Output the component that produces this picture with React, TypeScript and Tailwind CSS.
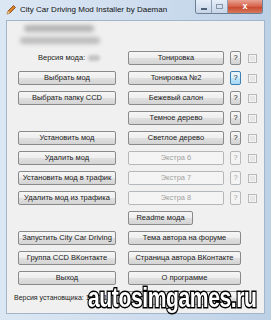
import type { ReactNode } from 'react';

type Kind = 'normal' | 'disabled' | 'focus';

function Btn({ children, width, kind = 'normal' }: { children?: ReactNode; width: string; kind?: Kind }) {
  const look =
    kind === 'disabled'
      ? 'border-[#b5b8bb] bg-[#f4f4f4] text-[#a3a3a3]'
      : kind === 'focus'
        ? 'border-[#3c7fb1] bg-[linear-gradient(#eaf6fd_0%,#d9f0fc_50%,#bee6fd_50%,#a7d9f5_100%)] text-[#1a1a1a]'
        : 'border-[#8a8a8a] bg-[linear-gradient(#f6f6f6_0%,#eeeeee_50%,#e0e0e0_50%,#d4d4d4_100%)] text-[#1a1a1a]';
  return (
    <div
      className={`${width} flex h-[14px] shrink-0 items-center justify-center rounded-[2px] border text-[7.5px] leading-none whitespace-nowrap ${look}`}
    >
      {children}
    </div>
  );
}

function Check() {
  return (
    <div className="ml-[7px] flex h-[9px] w-[9px] shrink-0 items-center justify-center border border-[#b9b9b9] bg-[#f4f4f4]">
      <div className="h-[5px] w-[5px] bg-[#e6e6e6]" />
    </div>
  );
}

function Extra({ label, kind = 'normal', q = 'normal' }: { label: string; kind?: Kind; q?: Kind }) {
  return (
    <div className="flex items-center">
      <Btn width="w-[96px]" kind={kind}>
        {label}
      </Btn>
      <div className="ml-[6px]">
        <Btn width="w-[11px]" kind={q}>
          ?
        </Btn>
      </div>
      <Check />
    </div>
  );
}

function Row({ left, right, indent = 'pl-[11px]' }: { left?: ReactNode; right?: ReactNode; indent?: string }) {
  return (
    <div className={`flex h-[14px] items-center ${indent}`}>
      <div className="flex w-[110px] shrink-0 items-center">{left}</div>
      {right}
    </div>
  );
}

export default function App() {
  return (
    <div
      className="relative h-[320px] w-[271px] overflow-hidden bg-[linear-gradient(90deg,#dce7f4_0%,#cddcee_55%,#bcd0e6_100%)]"
      style={{ fontFamily: '"Liberation Sans", Arial, sans-serif' }}
    >
      <div className="flex h-[20px] items-start">
        <div className="flex h-[20px] items-center pl-[6px]">
          <svg width="10" height="10" viewBox="0 0 10 10">
            <path d="M1 9 L2 6 L7.5 0.5 L9.5 2.5 L4 8 Z" fill="#d9822b" stroke="#7a4312" strokeWidth="0.8" />
            <path d="M1 9 L2 6 L4 8 Z" fill="#f4d7a0" />
          </svg>
          <span className="ml-[4px] text-[8px] text-[#111]">City Car Driving Mod Installer by Daeman</span>
        </div>
        <div className="ml-auto mr-[8px] flex h-[14px] overflow-hidden rounded-b-[3px] border border-t-0 border-[#6d7f96]">
          <div className="flex w-[16px] items-end justify-center border-r border-[#8d9fb5] bg-[linear-gradient(#e6eef8,#c6d5e7)] pb-[3px]">
            <div className="h-[2px] w-[6px] border border-[#50627a] bg-white" />
          </div>
          <div className="flex w-[16px] items-center justify-center border-r border-[#8d9fb5] bg-[linear-gradient(#e6eef8,#c6d5e7)]">
            <div className="h-[5px] w-[7px] border border-[#8696ab]" />
          </div>
          <div className="flex w-[34px] items-center justify-center bg-[linear-gradient(#e8a393_0%,#d6614a_50%,#c7432b_51%,#d67a5c_100%)] text-[9px] font-bold leading-none text-white">
            x
          </div>
        </div>
      </div>

      <div className="mx-[6px] h-[294px] border border-[#a3b5ca] bg-[#f0f0f0]">
        <div className="h-[30px] pl-[17px] pt-[4px]">
          <div className="h-[7px] w-[70px] rounded-full bg-[#b4b4b4] blur-[2px]" />
          <div className="ml-[-4px] mt-[5px] h-[7px] w-[80px] rounded-full bg-[#bcbcbc] blur-[2px]" />
        </div>

        <div className="flex flex-col gap-[6px]">
          <Row
            left={
              <div className="flex items-center pl-[20px] text-[7.5px] text-[#1a1a1a]">
                Версия мода:
                <div className="ml-[3px] h-[6px] w-[12px] rounded-full bg-[#c4c4c4] blur-[1.5px]" />
              </div>
            }
            right={<Extra label="Тонировка" />}
          />
          <Row left={<Btn width="w-[98px]">Выбрать мод</Btn>} right={<Extra label="Тонировка №2" q="focus" />} />
          <Row left={<Btn width="w-[98px]">Выбрать папку CCD</Btn>} right={<Extra label="Бежевый салон" />} />
          <Row right={<Extra label="Темное дерево" />} />
          <Row left={<Btn width="w-[98px]">Установить мод</Btn>} right={<Extra label="Светлое дерево" />} />
          <Row left={<Btn width="w-[98px]">Удалить мод</Btn>} right={<Extra label="Экстра 6" kind="disabled" q="disabled" />} />
          <Row
            left={<Btn width="w-[98px]">Установить мод в трафик</Btn>}
            right={<Extra label="Экстра 7" kind="disabled" q="disabled" />}
          />
          <Row
            left={<Btn width="w-[98px]">Удалить мод из трафика</Btn>}
            right={<Extra label="Экстра 8" kind="disabled" q="disabled" />}
          />
          <Row right={<Btn width="w-[65px]">Readme мода</Btn>} />
          <Row
            left={<Btn width="w-[98px]">Запустить City Car Driving</Btn>}
            right={<Btn width="w-[113px]">Тема автора на форуме</Btn>}
          />
          <Row
            left={<Btn width="w-[98px]">Группа CCD ВКонтакте</Btn>}
            right={<Btn width="w-[113px]">Страница автора ВКонтакте</Btn>}
          />
          <Row left={<Btn width="w-[98px]">Выход</Btn>} right={<Btn width="w-[113px]">О программе</Btn>} />
          <div className="flex h-[14px] items-center pl-[7px]">
            <span className="w-[112px] shrink-0 whitespace-nowrap text-[7px] text-[#1a1a1a]">Версия установщика: 1.4.0.12</span>
            <Btn width="w-[113px]" />
          </div>
        </div>
      </div>

      <div className="absolute left-[88px] top-[285px] origin-left scale-x-[0.78] text-[27px] font-bold leading-none tracking-[-0.5px] text-white [-webkit-text-stroke:3px_#000] [paint-order:stroke_fill]">
        autosimgames.ru
      </div>
    </div>
  );
}
